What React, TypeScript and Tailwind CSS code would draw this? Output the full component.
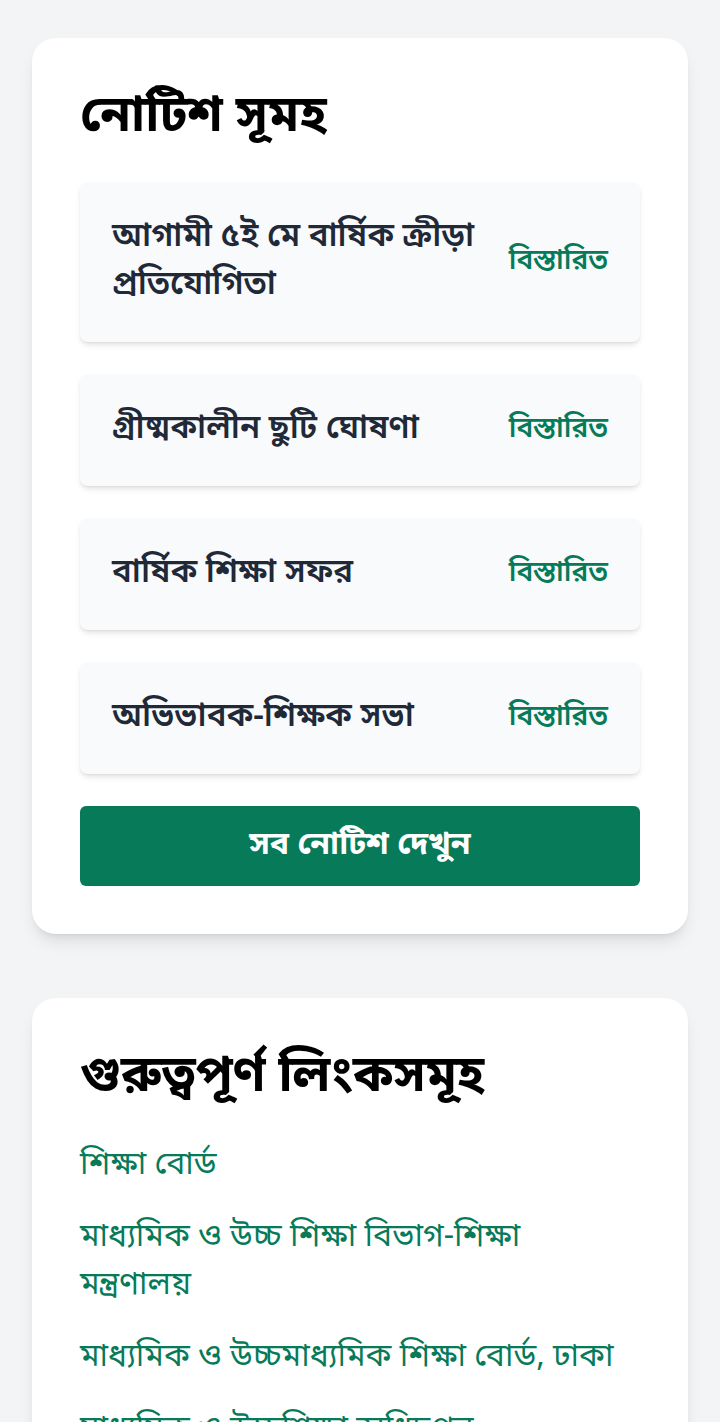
import React from "react";

const notices = [
  "আগামী ৫ই মে বার্ষিক ক্রীড়া প্রতিযোগিতা",
  "গ্রীষ্মকালীন ছুটি ঘোষণা",
  "বার্ষিক শিক্ষা সফর",
  "অভিভাবক-শিক্ষক সভা",
];

const links = [
  "শিক্ষা বোর্ড",
  "মাধ্যমিক ও উচ্চ শিক্ষা বিভাগ-শিক্ষা মন্ত্রণালয়",
  "মাধ্যমিক ও উচ্চমাধ্যমিক শিক্ষা বোর্ড, ঢাকা",
  "মাধ্যমিক ও উচ্চশিক্ষা অধিদপ্তর",
  "বাংলাদেশ শিক্ষা তথ্য ও পরিসংখ্যান ব্যুরো",
];

export default function App() {
  return (
    <div className="min-h-screen bg-[#f3f4f6] px-8 pt-[38px] pb-16 font-['Noto_Sans_Bengali','Noto_Sans',sans-serif]">
      <div className="flex flex-col gap-16">
        <section className="rounded-3xl bg-white p-12 shadow-lg">
          <h2 className="mb-8 text-[50px] leading-[64px] font-bold text-black">নোটিশ সূমহ</h2>
          <div className="flex flex-col gap-8">
            {notices.map((n) => (
              <div
                key={n}
                className="flex items-center justify-between gap-6 rounded-lg bg-gray-50 p-8 shadow-md"
              >
                <p className="text-[33px] leading-[48px] font-semibold text-[#1f2937]">{n}</p>
                <a className="shrink-0 text-[28px] font-semibold text-[#077a59]">বিস্তারিত</a>
              </div>
            ))}
          </div>
          <button className="mt-8 flex h-20 w-full items-center justify-center rounded-md bg-[#077a59] text-[32px] font-bold text-white">
            সব নোটিশ দেখুন
          </button>
        </section>

        <section className="rounded-3xl bg-white p-12 shadow-lg">
          <h2 className="mb-8 text-[50px] leading-[64px] font-bold text-black">গুরুত্বপূর্ণ লিংকসমূহ</h2>
          <ul className="flex flex-col gap-6 pr-3">
            {links.map((l) => (
              <li key={l}>
                <a className="text-[32px] leading-[48px] text-[#077a59]">{l}</a>
              </li>
            ))}
          </ul>
        </section>
      </div>
    </div>
  );
}
